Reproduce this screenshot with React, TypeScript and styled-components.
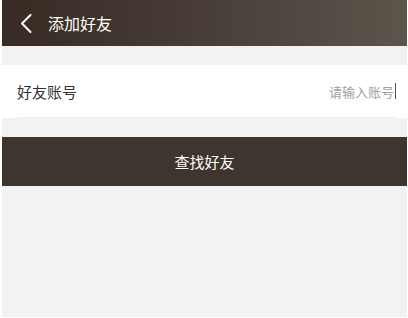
import React from "react";
import styled, { createGlobalStyle } from "styled-components";

const Global = createGlobalStyle`
  html, body { margin: 0; padding: 0; background: #ffffff; }
  body { font-family: "Noto Sans CJK SC", "Liberation Sans", sans-serif; }
  * { box-sizing: border-box; }
`;

const Page = styled.div`
  width: 405px;
  height: 317px;
  margin-left: 2px;
  background: #f2f2f2;
  display: flex;
  flex-direction: column;
`;

const Header = styled.header`
  height: 46px;
  display: flex;
  align-items: center;
  padding-left: 17px;
  gap: 15px;
  background: linear-gradient(90deg, #372b24 0%, #463c35 45%, #5b554c 100%);
  color: #ffffff;
`;

const BackButton = styled.button`
  border: 0;
  padding: 0;
  background: transparent;
  width: 14px;
  height: 20px;
  display: flex;
  align-items: center;
  justify-content: center;
  cursor: pointer;
`;

const Title = styled.h1`
  margin: 0;
  font-size: 16px;
  font-weight: 400;
  line-height: 1;
  color: #ffffff;
`;

const Form = styled.div`
  margin-top: 19px;
  background: #ffffff;
`;

const Row = styled.label`
  height: 53px;
  margin: 0 11px 0 15px;
  display: flex;
  align-items: center;
  border-bottom: 1px solid #f0f0f0;
`;

const Label = styled.span`
  font-size: 15px;
  color: #333333;
  flex: 1;
`;

const Input = styled.input`
  border: 0;
  outline: none;
  text-align: right;
  width: 200px;
  font-family: inherit;
  font-size: 13px;
  color: #333;
  padding: 0;
  caret-color: #333;
  &::placeholder { color: #a0a0a0; }
`;

const Caret = styled.span`
  width: 1px;
  height: 16px;
  background: #555;
  margin-left: 1px;
`;

const SearchButton = styled.button`
  margin-top: 19px;
  height: 49px;
  border: 0;
  background: #3e352f;
  color: #ffffff;
  font-family: inherit;
  font-size: 15px;
  cursor: pointer;
`;

export default function App() {
  return (
    <>
      <Global />
      <Page>
        <Header>
          <BackButton aria-label="返回">
            <svg width="12" height="19" viewBox="0 0 12 19" fill="none">
              <path d="M10.5 1 L2 9.5 L10.5 18" stroke="#ffffff" strokeWidth="2" strokeLinecap="round" strokeLinejoin="round" />
            </svg>
          </BackButton>
          <Title>添加好友</Title>
        </Header>
        <Form>
          <Row>
            <Label>好友账号</Label>
            <Input placeholder="请输入账号" />
            <Caret />
          </Row>
        </Form>
        <SearchButton>查找好友</SearchButton>
      </Page>
    </>
  );
}
